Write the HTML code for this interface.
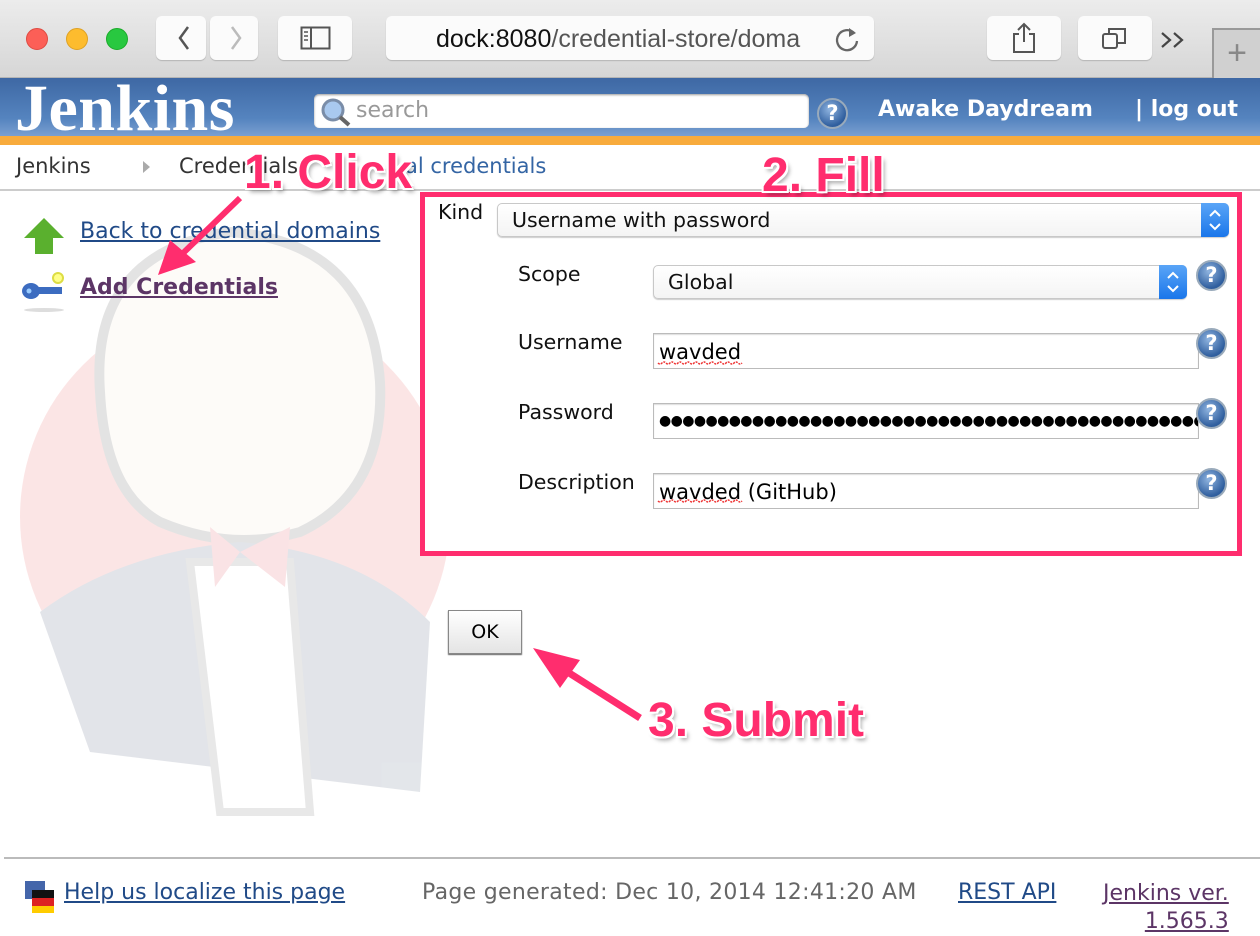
<!DOCTYPE html>
<html><head><meta charset="utf-8"><style>
*{margin:0;padding:0;box-sizing:border-box}
body{width:1260px;height:936px;overflow:hidden;background:#fff;font-family:"DejaVu Sans","Liberation Sans",sans-serif;position:relative}
.abs{position:absolute}
.tb{left:0;top:0;width:1260px;height:78px;background:linear-gradient(#ececec,#d6d6d6);border-bottom:1px solid #b5b5b5}
.btn{background:#fbfbfb;border-radius:6px;box-shadow:0 1px 1px rgba(0,0,0,.18);height:44px;top:16px}
.hdr{left:0;top:78px;width:1260px;height:58px;background:linear-gradient(#3e68a4,#5584bf 70%,#7a9fd0)}
.org{left:0;top:136px;width:1260px;height:9px;background:#f8ab3c}
a{color:#204a87}
.lbl{font-size:20.5px;color:#111}
.inp{border:1px solid #bbb;background:#fff;height:36px;font-size:21px;padding:6px 5px;color:#000;box-shadow:inset 0 1px 1px #ddd}
.sel{border:1px solid #c8c8c8;border-radius:5px;background:linear-gradient(#fff,#f4f4f4);height:34px;font-size:20.5px;padding:4px 14px;color:#111;box-shadow:0 1px 1px #ccc}
.arr{position:absolute;right:-1px;top:-1px;width:28px;height:34px;background:linear-gradient(#5aa5f7,#1a76ea);border-radius:0 5px 5px 0}
.help{width:31px;height:31px;border-radius:50%;background:radial-gradient(circle at 40% 35%,#8fb4e0,#2f5e9e 70%);border:2px solid #9ab;color:#fff;font-weight:bold;font-size:21px;text-align:center;line-height:27px}
.ann{font-family:"Liberation Sans",sans-serif;font-weight:bold;color:#ff2d6e;font-size:46px;text-shadow:0 0 3px #fff,2px 2px 0 #fff,-2px -2px 0 #fff,2px -2px 0 #fff,-2px 2px 0 #fff,3px 4px 4px rgba(0,0,0,.35)}
</style></head><body>
<div class="abs tb"></div>
<div class="abs" style="left:26px;top:28px;width:22px;height:22px;border-radius:50%;background:#fc5f57;border:1px solid #de4a41"></div>
<div class="abs" style="left:66px;top:28px;width:22px;height:22px;border-radius:50%;background:#fdbc2e;border:1px solid #dea123"></div>
<div class="abs" style="left:106px;top:28px;width:22px;height:22px;border-radius:50%;background:#28c840;border:1px solid #1aab29"></div>
<div class="abs btn" style="left:156px;width:50px"></div>
<div class="abs btn" style="left:210px;width:48px"></div>
<svg class="abs" style="left:156px;top:16px" width="110" height="44"><path d="M32 11 L24 22 L32 33" stroke="#555" stroke-width="2.5" fill="none"/><path d="M76 11 L84 22 L76 33" stroke="#bbb" stroke-width="2.5" fill="none"/></svg>
<div class="abs btn" style="left:278px;width:74px"></div>
<svg class="abs" style="left:300px;top:26px" width="32" height="26"><rect x="1.5" y="1.5" width="28" height="21" fill="none" stroke="#555" stroke-width="2"/><line x1="11" y1="1" x2="11" y2="23" stroke="#555" stroke-width="2"/><path d="M4 6h4M4 10h4M4 14h4" stroke="#555" stroke-width="1.5"/></svg>
<div class="abs btn" style="left:386px;width:488px"></div>
<div class="abs" style="left:436px;top:25px;font-family:'Liberation Sans',sans-serif;font-size:25px;color:#111;white-space:nowrap;width:382px;overflow:hidden">dock:8080<span style="color:#555">/credential-store/doma</span></div>
<svg class="abs" style="left:832px;top:24px" width="30" height="30"><path d="M22 9 A10 10 0 1 0 25 17" stroke="#666" stroke-width="2.3" fill="none"/><path d="M17 4 L24 9 L17 13" fill="#666"/></svg>
<div class="abs btn" style="left:987px;width:74px"></div>
<svg class="abs" style="left:1010px;top:22px" width="28" height="32"><path d="M9 12H4V30H24V12H19" stroke="#555" stroke-width="2" fill="none"/><path d="M14 2V20M8 8L14 2L20 8" stroke="#555" stroke-width="2" fill="none"/></svg>
<div class="abs btn" style="left:1078px;width:74px"></div>
<svg class="abs" style="left:1100px;top:24px" width="30" height="30"><rect x="3" y="10" width="14" height="14" rx="2" fill="none" stroke="#555" stroke-width="2"/><path d="M9 10V5H25V19H17" fill="none" stroke="#555" stroke-width="2"/></svg>
<svg class="abs" style="left:1160px;top:30px" width="30" height="20"><path d="M2 3L10 10L2 17M14 3L22 10L14 17" stroke="#444" stroke-width="2.2" fill="none"/></svg>
<div class="abs" style="left:1212px;top:28px;width:48px;height:50px;border-left:2px solid #999;border-top:2px solid #999;background:#d0d0d0;color:#888;font-size:34px;text-align:center;line-height:46px;font-family:'Liberation Sans',sans-serif">+</div>

<div class="abs hdr"></div>
<div class="abs" style="left:15px;top:76px;font-family:'Liberation Serif',serif;font-weight:bold;font-size:66px;color:#fff;line-height:66px;letter-spacing:0.5px">Jenkins</div>
<div class="abs" style="left:314px;top:94px;width:495px;height:34px;background:#fff;border-radius:5px;box-shadow:inset 0 1px 2px #999"></div>
<svg class="abs" style="left:318px;top:96px" width="36" height="32"><circle cx="15" cy="14" r="10" fill="#a9c9ef" stroke="#7a8da8" stroke-width="3"/><line x1="22" y1="21" x2="31" y2="29" stroke="#666" stroke-width="4"/></svg>
<div class="abs" style="left:356px;top:98px;font-size:22px;color:#999">search</div>
<div class="abs help" style="left:817px;top:98px">?</div>
<div class="abs" style="left:878px;top:97px;font-size:22px;color:#fff;font-weight:bold">Awake Daydream</div>
<div class="abs" style="left:1135px;top:97px;font-size:22px;color:#fff;font-weight:bold">| log out</div>
<div class="abs org"></div>

<svg class="abs" style="left:0;top:192px" width="470" height="650">
<g opacity="0.13">
<circle cx="235" cy="325" r="215" fill="#e84040"/>
<path d="M100 200 Q90 60 230 40 Q370 50 380 190 Q385 300 300 340 Q230 360 160 330 Q105 300 100 200Z" fill="#f5e6d0" stroke="#333" stroke-width="10"/>
<path d="M40 420 Q120 360 240 350 Q360 360 430 430 L420 600 L90 560 Z" fill="#2a3a5a"/>
<path d="M190 370 L290 370 L310 620 L220 620 Z" fill="#fff" stroke="#555" stroke-width="8"/>
<path d="M240 360 L210 335 L215 395 Z M240 360 L290 335 L285 395 Z" fill="#e03040"/>
</g>
</svg>

<div class="abs" style="left:16px;top:154px;font-size:21px;color:#333">Jenkins</div>
<div class="abs" style="left:143px;top:161px;width:0;height:0;border-left:7px solid #aaa;border-top:6px solid transparent;border-bottom:6px solid transparent"></div>
<div class="abs" style="left:179px;top:154px;font-size:21px;color:#333">Credentials</div>
<div class="abs" style="left:405px;top:154px;font-size:21px;color:#3465a4">al credentials</div>
<div class="abs" style="left:0;top:189px;width:1260px;height:2px;background:#ccc"></div>

<svg class="abs" style="left:22px;top:216px" width="44" height="40"><path d="M22 2 L42 22 L31 22 L31 38 L13 38 L13 22 L2 22 Z" fill="#5ab02e"/></svg>
<a class="abs" style="left:80px;top:219px;font-size:22px" href="#">Back to credential domains</a>
<svg class="abs" style="left:20px;top:270px" width="48" height="44"><ellipse cx="24" cy="40" rx="20" ry="2" fill="#ddd"/><circle cx="38" cy="8" r="5" fill="#ff8" stroke="#dd4" stroke-width="2"/><ellipse cx="11" cy="21" rx="9" ry="8" fill="#3c6cc0"/><rect x="16" y="17" width="26" height="7" fill="#3c6cc0"/><circle cx="9" cy="21" r="2.5" fill="#9cf"/></svg>
<a class="abs" style="left:80px;top:275px;font-size:22px;font-weight:bold;color:#5c3566" href="#">Add Credentials</a>

<div class="abs" style="left:420px;top:192px;width:822px;height:364px;border:5px solid #ff2d6e;background:#fff"></div>
<div class="abs lbl" style="left:438px;top:200px">Kind</div>
<div class="abs sel" style="left:497px;top:203px;width:732px">Username with password<div class="arr"><svg width="28" height="34"><path d="M9 13L14 8L19 13M9 21L14 26L19 21" stroke="#fff" stroke-width="2" fill="none"/></svg></div></div>
<div class="abs lbl" style="left:518px;top:262px">Scope</div>
<div class="abs sel" style="left:653px;top:265px;width:534px">Global<div class="arr"><svg width="28" height="34"><path d="M9 13L14 8L19 13M9 21L14 26L19 21" stroke="#fff" stroke-width="2" fill="none"/></svg></div></div>
<div class="abs help" style="left:1196px;top:260px">?</div>
<div class="abs lbl" style="left:518px;top:330px">Username</div>
<div class="abs inp" style="left:653px;top:333px;width:546px">wavded</div>
<div class="abs help" style="left:1196px;top:328px">?</div>
<div class="abs lbl" style="left:518px;top:400px">Password</div>
<div class="abs inp" style="left:653px;top:403px;width:546px;overflow:hidden;white-space:nowrap;font-size:14px;padding-top:9px;letter-spacing:-0.6px">●●●●●●●●●●●●●●●●●●●●●●●●●●●●●●●●●●●●●●●●●●●●●●●●●●●●●●●●●●</div>
<div class="abs help" style="left:1196px;top:398px">?</div>
<div class="abs lbl" style="left:518px;top:470px">Description</div>
<div class="abs inp" style="left:653px;top:473px;width:546px">wavded (GitHub)</div>
<div class="abs help" style="left:1196px;top:468px">?</div>
<svg class="abs" style="left:655px;top:360px" width="90" height="150"><path d="M3 3 q2 2 4 0 t4 0 t4 0 t4 0 t4 0 t4 0 t4 0 t4 0 t4 0 t4 0 t4 0 t4 0 t4 0 t4 0 t4 0 t4 0 t4 0 t4 0 t4 0 t4 0 t4 0 M3 141 q2 2 4 0 t4 0 t4 0 t4 0 t4 0 t4 0 t4 0 t4 0 t4 0 t4 0 t4 0 t4 0 t4 0 t4 0 t4 0 t4 0 t4 0 t4 0 t4 0 t4 0 t4 0" stroke="#e33" stroke-width="1.5" fill="none" stroke-dasharray="2 1"/></svg>

<div class="abs" style="left:448px;top:610px;width:74px;height:44px;border:1px solid #888;background:linear-gradient(#fff,#e4e4e4);font-size:19px;text-align:center;line-height:42px;box-shadow:0 1px 1px #666">OK</div>

<svg class="abs" style="left:0;top:0" width="1260" height="936">
<path d="M240 198 L178 258" stroke="#ff2d6e" stroke-width="6"/><path d="M158 275 L170 240 L196 262 Z" fill="#ff2d6e"/>
<path d="M640 718 L555 664" stroke="#ff2d6e" stroke-width="7"/><path d="M533 648 L580 660 L560 688 Z" fill="#ff2d6e"/>
</svg>
<div class="abs ann" style="left:244px;top:145px;font-size:48px">1. Click</div>
<div class="abs ann" style="left:762px;top:148px;font-size:48px">2. Fill</div>
<div class="abs ann" style="left:648px;top:693px;font-size:48px">3. Submit</div>

<div class="abs" style="left:4px;top:857px;width:1256px;height:2px;background:#bbb"></div>
<svg class="abs" style="left:24px;top:880px" width="32" height="34"><rect x="1" y="1" width="20" height="18" fill="#4466aa"/><rect x="8" y="10" width="22" height="8" fill="#111"/><rect x="8" y="18" width="22" height="8" fill="#d22"/><rect x="8" y="26" width="22" height="7" fill="#fc0"/></svg>
<a class="abs" style="left:64px;top:880px;font-size:22px" href="#">Help us localize this page</a>
<div class="abs" style="left:422px;top:880px;font-size:22px;color:#666;letter-spacing:0.3px">Page generated: Dec 10, 2014 12:41:20 AM</div>
<a class="abs" style="left:958px;top:880px;font-size:22px" href="#">REST API</a>
<a class="abs" style="left:1103px;top:880px;font-size:22px;color:#5c3566;text-align:right;line-height:28px" href="#">Jenkins ver.<br>1.565.3</a>
</body></html>
